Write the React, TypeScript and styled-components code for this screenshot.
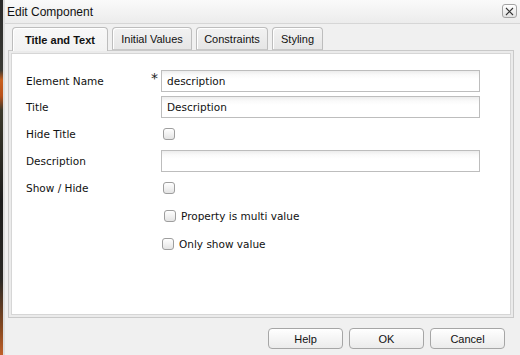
import React from "react";
import styled, { createGlobalStyle } from "styled-components";

const GlobalStyle = createGlobalStyle`
  html, body {
    margin: 0;
    padding: 0;
    background: #1e1e1e;
  }
  body {
    font-family: "DejaVu Sans", Verdana, sans-serif;
    color: #000;
  }
`;

const Page = styled.div`
  display: flex;
  width: 520px;
  height: 355px;
  overflow: hidden;
`;

const Desktop = styled.div`
  width: 3px;
  flex: none;
  background: linear-gradient(
    to bottom,
    #2a2a2a 0px,
    #3a3a34 70px,
    #c8601e 80px,
    #b8501a 96px,
    #3c3a2c 110px,
    #1c1c1c 200px,
    #2c2a26 280px,
    #8a4a20 330px,
    #c0602a 355px
  );
`;

const Dialog = styled.div`
  flex: 1;
  display: flex;
  flex-direction: column;
  background: #f0f0f0;
  border-left: 2px solid #dedede;
`;

const TitleBar = styled.div`
  height: 24px;
  display: flex;
  align-items: center;
  justify-content: space-between;
  padding: 0 3px 0 2px;
  background: linear-gradient(to bottom, #fafafa, #ececec);
  border-bottom: 1px solid #d6d6d6;
  box-sizing: border-box;
`;

const TitleText = styled.span`
  font-family: "Liberation Sans", Arial, sans-serif;
  font-size: 12px;
  color: #111;
`;

const CloseButton = styled.button`
  width: 15px;
  height: 14px;
  padding: 0;
  display: flex;
  align-items: center;
  justify-content: center;
  border: 1px solid #a4a4a4;
  border-radius: 3px;
  background: linear-gradient(to bottom, #ffffff, #e2e2e2);
  margin-top: -1px;
`;

const Body = styled.div`
  flex: 1;
  display: flex;
  flex-direction: column;
  padding: 3px 6px 0 3px;
`;

const TabStrip = styled.div`
  display: flex;
  gap: 4px;
  padding-left: 4px;
  height: 23px;
  position: relative;
  z-index: 1;
`;

const Tab = styled.div<{ $active?: boolean; $w: number }>`
  font-family: "Liberation Sans", Arial, sans-serif;
  font-size: 11px;
  font-weight: ${(p) => (p.$active ? "bold" : "normal")};
  width: ${(p) => p.$w}px;
  display: flex;
  align-items: center;
  justify-content: center;
  box-sizing: border-box;
  border: 1px solid #bdbdbd;
  border-bottom: ${(p) => (p.$active ? "none" : "1px solid #c8c8c8")};
  border-radius: 4px 4px 0 0;
  height: ${(p) => (p.$active ? "24px" : "23px")};
  background: ${(p) =>
    p.$active
      ? "linear-gradient(to bottom, #f8f8f8, #f2f2f2)"
      : "linear-gradient(to bottom, #f2f2f2, #e6e6e6)"};
  box-shadow: inset 1px 1px 0 #ffffff;
  color: #111;
`;

const PanelFrame = styled.div`
  height: 268px;
  box-sizing: border-box;
  border: 1px solid #c9c9c9;
  background: #ebebeb;
  padding: 2px;
`;

const Panel = styled.div`
  height: 100%;
  box-sizing: border-box;
  border: 1px solid #d6d6d6;
  background: #ffffff;
  padding: 16px 0 0 14px;
  display: flex;
  flex-direction: column;
  gap: 4px;
`;

const Row = styled.div<{ $kind: "input" | "check" }>`
  display: flex;
  align-items: center;
  height: ${(p) => (p.$kind === "input" ? "22px" : "24px")};
`;

const Label = styled.label`
  width: 125px;
  flex: none;
  font-size: 10.5px;
  color: #111;
`;

const Required = styled.span`
  width: 10px;
  flex: none;
  align-self: flex-start;
  font-size: 14px;
  line-height: 14px;
  margin-top: 1px;
  color: #222;
`;

const TextInput = styled.input`
  width: 319px;
  height: 22px;
  box-sizing: border-box;
  border: 1px solid #bdbdbd;
  background: linear-gradient(to bottom, #ececec 0px, #fafafa 4px, #ffffff 8px);
  padding: 0 5px;
  font-family: "DejaVu Sans", Verdana, sans-serif;
  font-size: 10.5px;
  color: #111;
  outline: none;
`;

const Box = styled.span<{ $shift?: number }>`
  width: 12px;
  height: 12px;
  flex: none;
  box-sizing: border-box;
  border: 1px solid #9e9e9e;
  border-radius: 3px;
  background: linear-gradient(to bottom, #ffffff, #e4e4e4);
  margin-left: ${(p) => p.$shift ?? 2}px;
`;

const CheckText = styled.span`
  font-size: 10.5px;
  margin-left: 5px;
  color: #111;
`;

const ButtonBar = styled.div`
  display: flex;
  justify-content: flex-end;
  gap: 6px;
  padding: 10px 9px 0 0;
`;

const Button = styled.button`
  width: 75px;
  height: 21px;
  box-sizing: border-box;
  border: 1px solid #a6a6a6;
  border-radius: 4px;
  background: linear-gradient(to bottom, #ffffff, #ebebeb);
  font-family: "Liberation Sans", Arial, sans-serif;
  font-size: 11px;
  color: #111;
  padding: 0;
`;

const tabs = [
  { name: "Title and Text", w: 96, active: true },
  { name: "Initial Values", w: 80 },
  { name: "Constraints", w: 72 },
  { name: "Styling", w: 51 },
];

function App() {
  return (
    <>
      <GlobalStyle />
      <Page>
        <Desktop />
        <Dialog>
          <TitleBar>
            <TitleText>Edit Component</TitleText>
            <CloseButton aria-label="close">
              <svg width="9" height="9" viewBox="0 0 9 9">
                <path d="M1 1 L8 8 M8 1 L1 8" stroke="#333" strokeWidth="1.1" />
              </svg>
            </CloseButton>
          </TitleBar>
          <Body>
            <TabStrip>
              {tabs.map((t) => (
                <Tab key={t.name} $active={t.active} $w={t.w}>
                  {t.name}
                </Tab>
              ))}
            </TabStrip>
            <PanelFrame>
              <Panel>
                <Row $kind="input">
                  <Label>Element Name</Label>
                  <Required>*</Required>
                  <TextInput defaultValue="description" />
                </Row>
                <Row $kind="input">
                  <Label>Title</Label>
                  <Required />
                  <TextInput defaultValue="Description" />
                </Row>
                <Row $kind="check">
                  <Label>Hide Title</Label>
                  <Required />
                  <Box />
                </Row>
                <Row $kind="input">
                  <Label>Description</Label>
                  <Required />
                  <TextInput defaultValue="" />
                </Row>
                <Row $kind="check">
                  <Label>Show / Hide</Label>
                  <Required />
                  <Box />
                </Row>
                <Row $kind="check">
                  <Label />
                  <Required />
                  <Box $shift={3} />
                  <CheckText>Property is multi value</CheckText>
                </Row>
                <Row $kind="check">
                  <Label />
                  <Required />
                  <Box $shift={1} />
                  <CheckText>Only show value</CheckText>
                </Row>
              </Panel>
            </PanelFrame>
            <ButtonBar>
              <Button>Help</Button>
              <Button>OK</Button>
              <Button>Cancel</Button>
            </ButtonBar>
          </Body>
        </Dialog>
      </Page>
    </>
  );
}

export default App;
